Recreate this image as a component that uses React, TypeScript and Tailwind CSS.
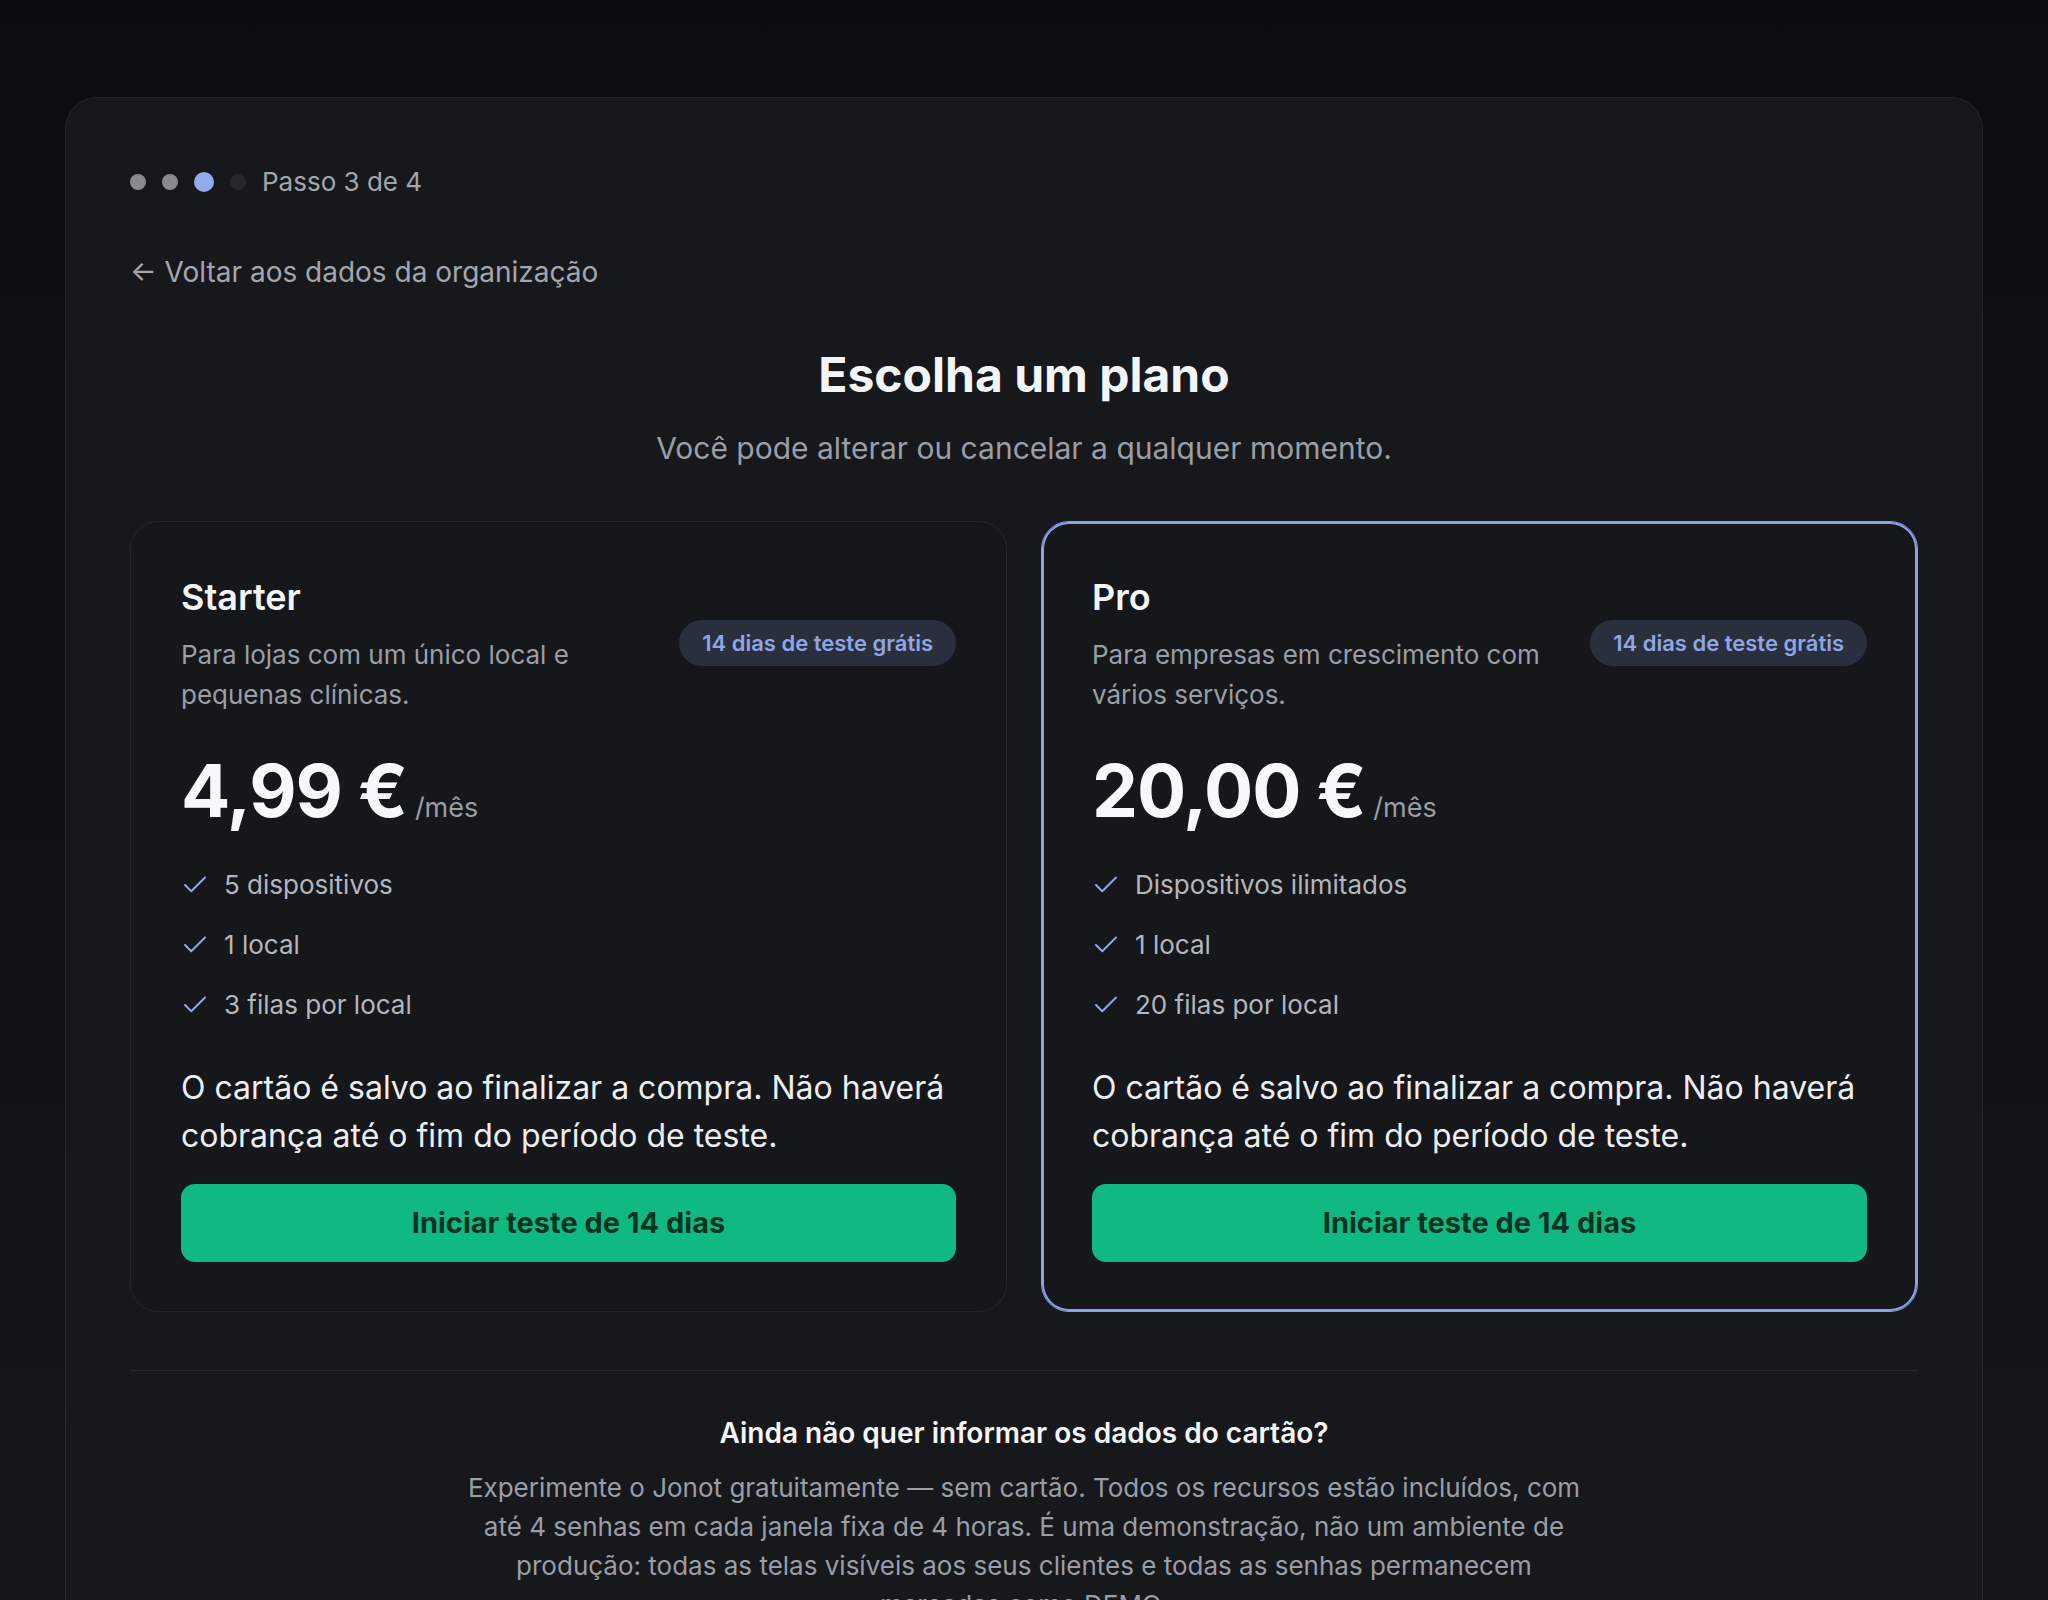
import { Check } from "lucide-react"

type Plan = {
  name: string
  description: string
  price: string
  features: string[]
  highlighted?: boolean
}

const PLANS: Plan[] = [
  {
    name: "Starter",
    description: "Para lojas com um único local e pequenas clínicas.",
    price: "4,99 €",
    features: ["5 dispositivos", "1 local", "3 filas por local"],
  },
  {
    name: "Pro",
    description: "Para empresas em crescimento com vários serviços.",
    price: "20,00 €",
    features: ["Dispositivos ilimitados", "1 local", "20 filas por local"],
    highlighted: true,
  },
]

function StepDots() {
  return (
    <div className="flex items-center gap-4">
      <span className="size-4 rounded-full bg-[#878a91]" />
      <span className="size-4 rounded-full bg-[#878a91]" />
      <span className="size-5 rounded-full bg-[#93acef]" />
      <span className="size-4 rounded-full bg-[#26272c]" />
      <span className="text-[26px] leading-8 text-[#a3a6ad]">Passo 3 de 4</span>
    </div>
  )
}

function PlanCard({ plan }: { plan: Plan }) {
  return (
    <div
      className={
        plan.highlighted
          ? "flex flex-col rounded-[28px] border border-[#8aa4e6] bg-[#16171b] px-[50px] pt-[53px] pb-[49px] ring-2 ring-inset ring-[#8aa4e6]"
          : "flex flex-col rounded-[28px] border border-[#26272c] bg-[#16171b] px-[50px] pt-[53px] pb-[49px]"
      }
    >
      {/* Header: name + blurb on the left, trial badge on the right */}
      <div className="flex items-center gap-6">
        <div className="flex-1">
          <h2 className="text-[36px] leading-[44px] font-semibold text-[#f4f5f7]">{plan.name}</h2>
          <p className="mt-4 text-[26px] leading-[40px] text-[#9a9ea6]">{plan.description}</p>
        </div>
        <span className="-mt-1 flex h-[46px] shrink-0 items-center rounded-full bg-[#2a2f3d] px-[23px] text-[22px] font-semibold text-[#90a6e4]">
          14 dias de teste grátis
        </span>
      </div>

      <div className="mt-10 flex items-baseline gap-2">
        <span className="text-[73px] leading-[72px] font-bold tracking-[-0.015em] text-[#f7f8fa]">
          {plan.price}
        </span>
        <span className="text-[27px] text-[#9a9ea6]">/mês</span>
      </div>

      <ul className="mt-[38px] flex flex-col gap-[24px]">
        {plan.features.map((f) => (
          <li key={f} className="flex items-center gap-[14px] text-[26px] leading-9 text-[#b3b6bd]">
            <Check size={30} strokeWidth={1.6} className="-ml-px shrink-0 text-[#8ea7e8]" />
            <span>{f}</span>
          </li>
        ))}
      </ul>

      <p className="mt-[41px] text-[32px] leading-[48px] text-[#eceef1]">
        O cartão é salvo ao finalizar a compra. Não haverá cobrança até o fim do período de teste.
      </p>

      <button
        type="button"
        className="mt-6 flex h-[78px] w-full items-center justify-center rounded-[14px] bg-[#10b981] text-[29px] font-bold text-[#053322]"
      >
        Iniciar teste de 14 dias
      </button>
    </div>
  )
}

export default function App() {
  return (
    <div
      className="h-[1600px] overflow-hidden bg-gradient-to-b from-[#0c0d10] to-[#15161a] px-[65px] pt-[97px]"
      style={{ fontFamily: "Inter, 'Noto Sans', sans-serif" }}
    >
      <div className="rounded-[32px] border border-[#25262b] bg-[#17181c] px-[64px] pt-[68px] pb-[80px]">
        <StepDots />

        <div className="mt-[54px] text-[28px] leading-10 text-[#a3a6ad]">← Voltar aos dados da organização</div>

        <div className="mt-[55px] text-center">
          <h1 className="text-[48px] leading-[56px] font-bold text-[#f4f5f7]">Escolha um plano</h1>
          <p className="mt-[25px] text-[30px] leading-10 text-[#9a9ea6]">
            Você pode alterar ou cancelar a qualquer momento.
          </p>
        </div>

        <div className="mt-[53px] grid grid-cols-2 gap-[34px]">
          {PLANS.map((p) => (
            <PlanCard key={p.name} plan={p} />
          ))}
        </div>

        <div className="mt-[58px] border-t border-[#26272c] pt-[44px] text-center">
          <h3 className="text-[28px] leading-9 font-semibold text-[#f4f5f7]">
            Ainda não quer informar os dados do cartão?
          </h3>
          <p className="mt-[17px] text-[26px] leading-[39px] text-[#9a9ea6]">
            Experimente o Jonot gratuitamente — sem cartão. Todos os recursos estão incluídos, com
            <br />
            até 4 senhas em cada janela fixa de 4 horas. É uma demonstração, não um ambiente de
            <br />
            produção: todas as telas visíveis aos seus clientes e todas as senhas permanecem
            <br />
            marcadas como DEMO.
          </p>
        </div>
      </div>
    </div>
  )
}
